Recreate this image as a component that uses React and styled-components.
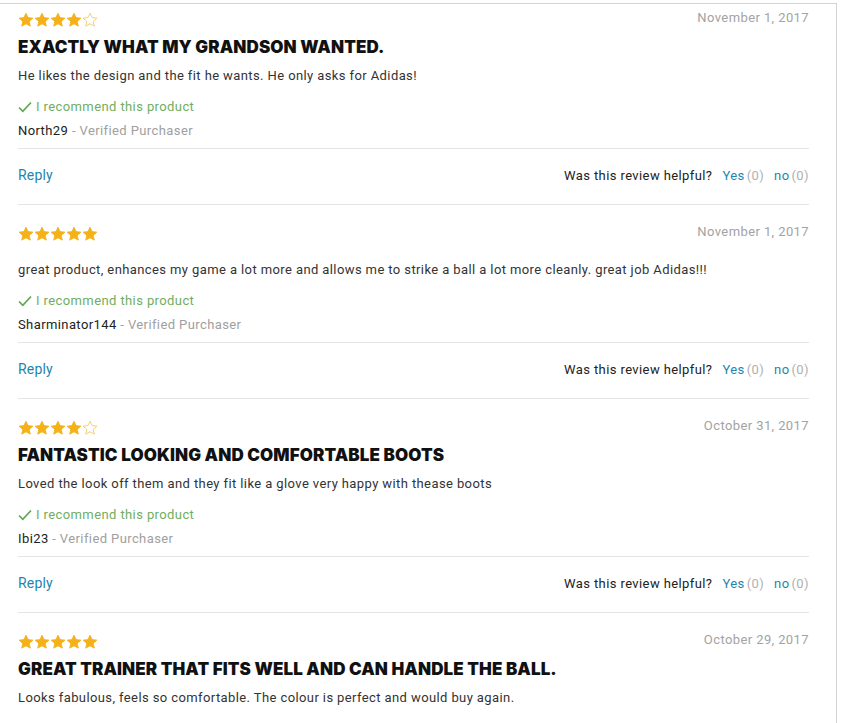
import React from 'react';
import styled, { createGlobalStyle } from 'styled-components';

const GlobalStyle = createGlobalStyle`
	html, body {
		margin: 0;
		padding: 0;
		background: #fff;
	}
	body {
		font-family: Roboto, "Liberation Sans", sans-serif;
		letter-spacing: 0.4px;
	}
`;

const Page = styled.div`
	margin-top: 3px;
	width: 837px;
	min-height: 720px;
	border-top: 1px solid #d4d4d4;
	border-right: 1px solid #d4d4d4;
	padding: 0 27px 0 18px;
	box-sizing: border-box;
`;

const ReviewItem = styled.article`
	padding-top: 19px;
	border-bottom: 1px solid #e4e4e4;

	&:first-child {
		padding-top: 6px;
	}
`;

const Header = styled.div`
	display: flex;
	justify-content: space-between;
	align-items: flex-start;
	height: 20px;
`;

const Stars = styled.div`
	display: flex;
	align-items: center;
	height: 20px;
`;

const DateText = styled.span`
	font-size: 13px;
	line-height: 15px;
	color: #a3a3a3;
	letter-spacing: 0.4px;
`;

const Title = styled.h3`
	margin: 6px 0 0;
	font-family: Inter, "Liberation Sans", sans-serif;
	font-weight: 900;
	font-size: 17px;
	line-height: 22px;
	color: #111;
	text-transform: uppercase;
	letter-spacing: 0.1px;
`;

const Body = styled.p`
	margin: 16px 0 0;
	font-size: 13px;
	line-height: 20px;
	color: #333;

	${Title} + & {
		margin-top: 8px;
	}
`;

const Recommend = styled.div`
	display: flex;
	align-items: center;
	gap: 4px;
	margin-top: 10px;
	font-size: 13px;
	line-height: 21px;
	color: #6fae5f;
`;

const Author = styled.div`
	margin-top: 4px;
	font-size: 13px;
	line-height: 20px;
	color: #222;
`;

const Verified = styled.span`
	color: #a0a0a0;
`;

const Divider = styled.div`
	height: 1px;
	margin-top: 7px;
	background: #e4e4e4;
`;

const Actions = styled.div`
	display: flex;
	justify-content: space-between;
	align-items: center;
	height: 20px;
	padding: 16px 0 19px;
	font-size: 13px;
`;

const LinkText = styled.span`
	color: #1d86ad;
	font-size: 14px;
	letter-spacing: 0.2px;
`;

const Helpful = styled.div`
	display: flex;
	align-items: center;
	color: #222;
	font-size: 13px;
`;

const Vote = styled.span`
	margin-left: 10px;
	color: #1d86ad;
	font-size: 13px;
`;

const Count = styled.span`
	margin-left: 2px;
	color: #b0b0b0;
`;

const Star = ({ filled }) => (
	<svg width="16" height="16" viewBox="0 0 24 24">
		<path
			d="M12 1.8l3.1 6.6 7.2.8-5.4 4.9 1.5 7.1L12 17.6l-6.4 3.6 1.5-7.1L1.7 9.2l7.2-.8z"
			fill={filled ? '#f4b118' : 'none'}
			stroke={filled ? '#f4b118' : '#f0c860'}
			strokeWidth="1.3"
			strokeLinejoin="round"
		/>
	</svg>
);

const Check = () => (
	<svg width="14" height="12" viewBox="0 0 14 12">
		<path d="M1 6.5l3.8 3.8L13 1.5" fill="none" stroke="#62a452" strokeWidth="1.7" />
	</svg>
);

const reviews = [
	{
		rating: 4,
		date: 'November 1, 2017',
		title: 'Exactly what my grandson wanted.',
		body: 'He likes the design and the fit he wants. He only asks for Adidas!',
		author: 'North29',
	},
	{
		rating: 5,
		date: 'November 1, 2017',
		body: 'great product, enhances my game a lot more and allows me to strike a ball a lot more cleanly. great job Adidas!!!',
		author: 'Sharminator144',
	},
	{
		rating: 4,
		date: 'October 31, 2017',
		title: 'Fantastic looking and comfortable boots',
		body: 'Loved the look off them and they fit like a glove very happy with thease boots',
		author: 'Ibi23',
	},
	{
		rating: 5,
		date: 'October 29, 2017',
		title: 'Great trainer that fits well and can handle the ball.',
		body: 'Looks fabulous, feels so comfortable. The colour is perfect and would buy again.',
		author: 'Mike77',
	},
];

function Review({ review }) {
	return (
		<ReviewItem>
			<Header>
				<Stars>
					{[1, 2, 3, 4, 5].map(n => <Star key={n} filled={n <= review.rating} />)}
				</Stars>
				<DateText>{review.date}</DateText>
			</Header>
			{review.title && <Title>{review.title}</Title>}
			<Body>{review.body}</Body>
			<Recommend><Check />I recommend this product</Recommend>
			<Author>{review.author} <Verified>- Verified Purchaser</Verified></Author>
			<Divider />
			<Actions>
				<LinkText>Reply</LinkText>
				<Helpful>
					Was this review helpful?
					<Vote>Yes<Count>(0)</Count></Vote>
					<Vote>no<Count>(0)</Count></Vote>
				</Helpful>
			</Actions>
		</ReviewItem>
	);
}

export default function App() {
	return (
		<>
			<GlobalStyle />
			<Page>
				{reviews.map((r, i) => <Review key={i} review={r} />)}
			</Page>
		</>
	);
}
